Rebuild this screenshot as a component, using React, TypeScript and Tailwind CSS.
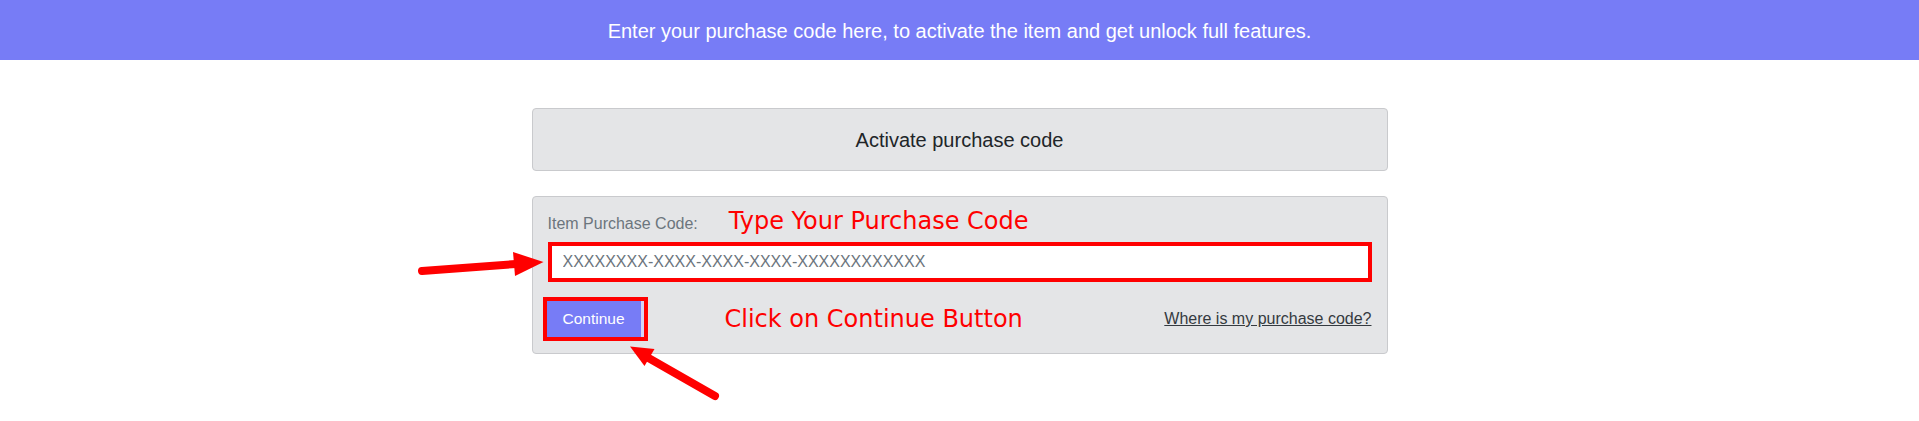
import React from "react";

export default function App() {
  return (
    <div className="relative w-full min-h-[421px] bg-white" style={{ fontFamily: '"Liberation Sans", Arial, sans-serif' }}>
      <div className="h-[60px] bg-[#777cf6] flex items-center justify-center text-white text-[20px] leading-[26px] pt-[1px]">
        Enter your purchase code here, to activate the item and get unlock full features.
      </div>

      <div className="w-[856px] mx-auto mt-[48px]">
        <div className="h-[63px] border border-[#c9cacd] rounded-[4px] bg-[#e4e5e7] flex items-center justify-center text-[20px] text-[#212529]">
          Activate purchase code
        </div>

        <div className="mt-[25px] h-[158px] border border-[#c9cacd] rounded-[4px] bg-[#e4e5e7] px-[15px] pt-[10px] pb-[12px]">
          <div className="flex items-baseline h-[28px]">
            <span className="text-[16px] leading-[24px] text-[#6c757d]">Item Purchase Code:</span>
            <span
              className="ml-[31px] text-[24px] leading-[28px] text-[#ff0000]"
              style={{ fontFamily: '"DejaVu Sans", Verdana, sans-serif' }}
            >
              Type Your Purchase Code
            </span>
          </div>

          <div className="mt-[7px] h-[40px] border-4 border-[#ff0000] bg-white flex items-center pl-[11px]">
            <input
              className="w-full bg-transparent outline-none text-[16px] text-[#495057] placeholder:text-[#6c757d]"
              style={{ fontFamily: '"Liberation Sans", Arial, sans-serif' }}
              placeholder="XXXXXXXX-XXXX-XXXX-XXXX-XXXXXXXXXXXX"
            />
          </div>

          <div className="mt-[15px] flex items-center">
            <div className="-ml-[5px] w-[105px] h-[44px] border-4 border-[#ff0000] bg-[#d4d5f6] flex">
              <button className="w-[94px] h-[36px] bg-[#777cf6] text-white text-[15.5px] leading-[20px]">
                Continue
              </button>
            </div>
            <span
              className="ml-[77px] text-[24px] leading-[28px] text-[#ff0000]"
              style={{ fontFamily: '"DejaVu Sans", Verdana, sans-serif' }}
            >
              Click on Continue Button
            </span>
            <a href="#" className="ml-auto text-[16px] leading-[24px] text-[#343a40] underline">
              Where is my purchase code?
            </a>
          </div>
        </div>
      </div>

      <svg
        className="absolute left-0 top-0 pointer-events-none"
        width="1919"
        height="421"
        viewBox="0 0 1919 421"
      >
        <line x1="422" y1="271" x2="516" y2="264" stroke="#ff0000" strokeWidth="8" strokeLinecap="round" />
        <polygon points="513,252 543.5,262 515,276" fill="#ff0000" />
        <line x1="715" y1="396" x2="645" y2="356" stroke="#ff0000" strokeWidth="8" strokeLinecap="round" />
        <polygon points="630,346.5 654.5,349 644.5,366" fill="#ff0000" />
      </svg>
    </div>
  );
}
